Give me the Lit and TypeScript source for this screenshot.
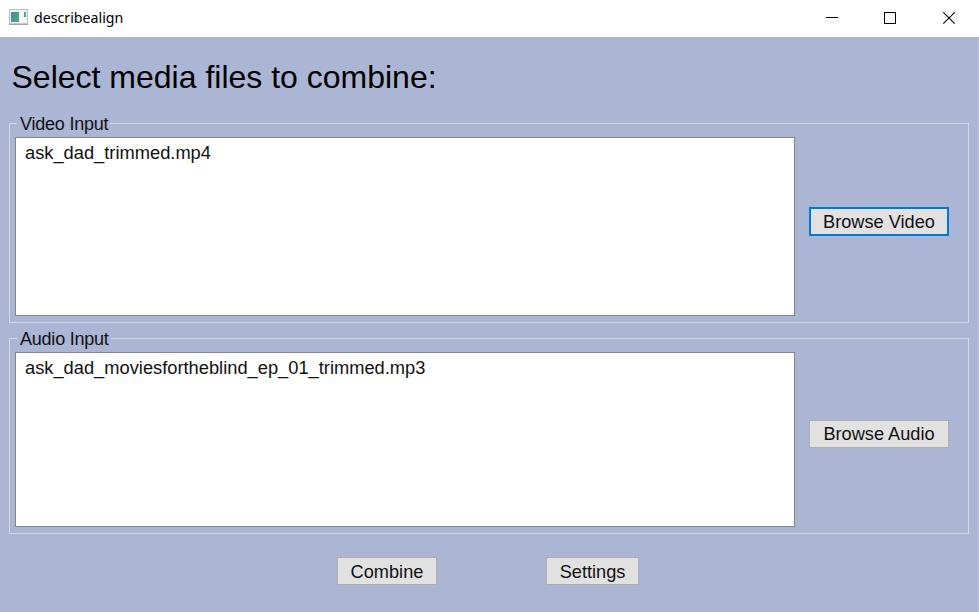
import { LitElement, html, css } from "lit";
import { customElement, property } from "lit/decorators.js";
import { classMap } from "lit/directives/class-map.js";

@customElement("push-button")
class PushButton extends LitElement {
  @property() label = "";
  @property({ type: Boolean }) focused = false;

  static styles = css`
    :host { display: block; }
    button {
      display: flex; align-items: center; justify-content: center;
      box-sizing: border-box; width: 100%; height: 100%;
      margin: 0; padding: 1px 0 0; border: 1px solid #adadad;
      background: #e1e1e1; color: #111;
      font: 18.2px/20px "Liberation Sans", Arial, sans-serif;
      white-space: nowrap;
    }
    button.focused { border: 2px solid #0078d7; }
  `;

  render() {
    return html`<button class=${classMap({ focused: this.focused })}>${this.label}</button>`;
  }
}

@customElement("file-group")
class FileGroup extends LitElement {
  @property() label = "";
  @property({ attribute: false }) files: string[] = [];
  @property() action = "";
  @property({ type: Boolean }) active = false;

  static styles = css`
    :host { display: block; }
    .frame {
      box-sizing: border-box; height: 100%; position: relative;
      border: 1px solid #d5d8df;
      padding: 13px 19px 6px 5px;
      display: flex; gap: 14px;
      font: 18.3px/22px "Liberation Sans", Arial, sans-serif; color: #111;
    }
    .legend {
      position: absolute; left: 7px; top: -11px; padding: 0 2px 0 3px;
      background: #abb5d4; white-space: nowrap;
      font-size: 18px; letter-spacing: -0.22px;
    }
    .list {
      flex: 1; box-sizing: border-box; background: #fff;
      border: 1px solid #828790; padding: 4px 9px;
    }
    push-button { width: 140px; height: 29px; align-self: center; }
    .normal { height: 28px; margin-top: -12px; }
    .lead { margin-top: -11px; }
  `;

  render() {
    return html`
      <div class="frame">
        <span class="legend">${this.label}</span>
        <div class="list">${this.files.map((f) => html`<div>${f}</div>`)}</div>
        <push-button
          class=${classMap({ normal: !this.active, lead: this.active })}
          .label=${this.action}
          .focused=${this.active}
        ></push-button>
      </div>
    `;
  }
}

@customElement("app-root")
class AppRoot extends LitElement {
  static styles = css`
    :host {
      display: flex; flex-direction: column; box-sizing: border-box;
      width: 979px; height: 612px; overflow: hidden; background: #abb5d4;
      font-family: "Liberation Sans", Arial, sans-serif; color: #000;
    }
    header {
      height: 37px; flex: none; display: flex; align-items: center; background: #fff;
      font: 14.2px/20px "Noto Sans", "Open Sans", sans-serif;
    }
    .logo { margin: 0 6px 3px 9px; flex: none; }
    .title { flex: 1; padding-bottom: 2px; }
    .controls { flex: none; display: block; }
    main {
      flex: 1; box-sizing: border-box; padding: 0 9px;
      border-right: 1px solid #b9c2dc;
      display: flex; flex-direction: column;
    }
    h1 {
      margin: 22px 0 0 2.5px; height: 64px;
      font-size: 32px; line-height: 37px; font-weight: 400;
    }
    file-group { width: 960px; flex: none; }
    .video { height: 200px; }
    .audio { height: 196px; margin-top: 15px; }
    footer { display: flex; gap: 109px; margin: 23px 0 0 328px; }
    footer push-button { height: 28px; }
    .combine { width: 100px; }
    .settings { width: 93px; }
  `;

  render() {
    return html`
      <header>
        <svg class="logo" width="19" height="16" viewBox="0 0 19 16">
          <defs>
            <linearGradient id="screen" x1="0" y1="0" x2="1" y2="1">
              <stop offset="0" stop-color="#4389a8" />
              <stop offset="1" stop-color="#5aa67b" />
            </linearGradient>
          </defs>
          <rect x="0.5" y="0.5" width="18" height="14.5" fill="#f1f2f4" stroke="#b9bdc4" />
          <path d="M0 15.3H19" stroke="#8f959d" />
          <rect x="2" y="3" width="8" height="10" fill="url(#screen)" />
          <rect x="11.5" y="3" width="2" height="10" fill="#fff" />
          <rect x="15" y="3" width="2" height="5" fill="#55a18d" />
        </svg>
        <span class="title">describealign</span>
        <svg class="controls" width="169" height="37" viewBox="0 0 169 37" fill="none" stroke="#000">
          <path d="M16 17.5H28" />
          <rect x="74.5" y="12.5" width="11" height="11" />
          <path d="M133.3 12.3L144.7 23.7M144.7 12.3L133.3 23.7" stroke-width="1.1" />
        </svg>
      </header>
      <main>
        <h1>Select media files to combine:</h1>
        <file-group class="video" label="Video Input" action="Browse Video" active
          .files=${["ask_dad_trimmed.mp4"]}></file-group>
        <file-group class="audio" label="Audio Input" action="Browse Audio"
          .files=${["ask_dad_moviesfortheblind_ep_01_trimmed.mp3"]}></file-group>
        <footer>
          <push-button class="combine" label="Combine"></push-button>
          <push-button class="settings" label="Settings"></push-button>
        </footer>
      </main>
    `;
  }
}
